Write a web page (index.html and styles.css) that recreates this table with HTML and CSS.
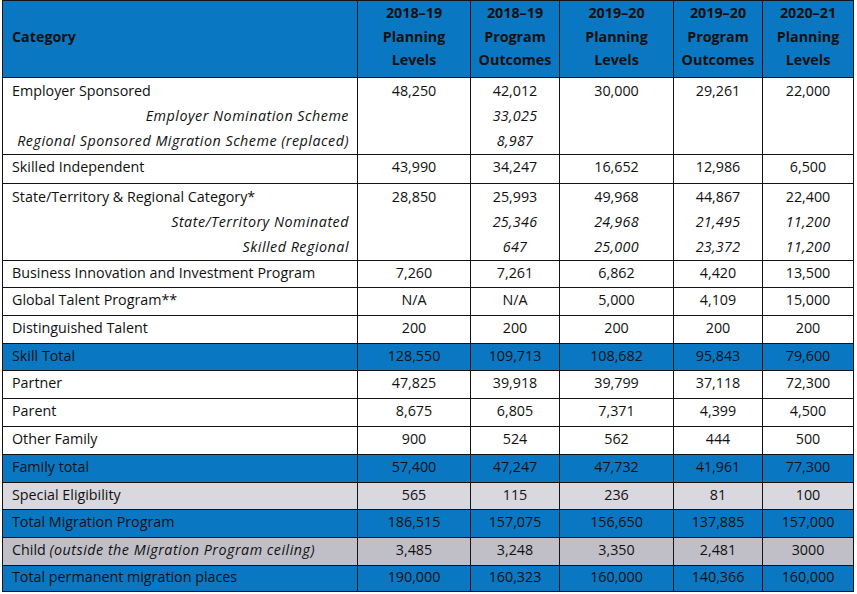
FILE: index.html
```html
<!DOCTYPE html>
<html lang="en">
<head>
<meta charset="utf-8">
<title>Migration Program planning levels</title>
<link rel="stylesheet" href="styles.css">
</head>
<body>
<table class="grid">
  <colgroup>
    <col class="c-cat">
    <col class="c-wide">
    <col class="c-narrow">
    <col class="c-wide2">
    <col class="c-narrow">
    <col class="c-last">
  </colgroup>
  <thead>
    <tr class="head">
      <th class="cat">Category</th>
      <th>2018–19<br>Planning<br>Levels</th>
      <th>2018–19<br>Program<br>Outcomes</th>
      <th>2019–20<br>Planning<br>Levels</th>
      <th>2019–20<br>Program<br>Outcomes</th>
      <th>2020–21<br>Planning<br>Levels</th>
    </tr>
  </thead>
  <tbody>
    <tr class="multi">
      <td class="cat"><div class="ln">Employer Sponsored</div><div class="ln sub">Employer Nomination Scheme</div><div class="ln sub">Regional Sponsored Migration Scheme (replaced)</div></td>
      <td><div class="ln">48,250</div></td>
      <td><div class="ln">42,012</div><div class="ln it">33,025</div><div class="ln it">8,987</div></td>
      <td><div class="ln">30,000</div></td>
      <td><div class="ln">29,261</div></td>
      <td><div class="ln">22,000</div></td>
    </tr>
    <tr class="r29">
      <td class="cat">Skilled Independent</td><td>43,990</td><td>34,247</td><td>16,652</td><td>12,986</td><td>6,500</td>
    </tr>
    <tr class="multi">
      <td class="cat"><div class="ln">State/Territory &amp; Regional Category*</div><div class="ln sub">State/Territory Nominated</div><div class="ln sub">Skilled Regional</div></td>
      <td><div class="ln">28,850</div></td>
      <td><div class="ln">25,993</div><div class="ln it">25,346</div><div class="ln it">647</div></td>
      <td><div class="ln">49,968</div><div class="ln it">24,968</div><div class="ln it">25,000</div></td>
      <td><div class="ln">44,867</div><div class="ln it">21,495</div><div class="ln it">23,372</div></td>
      <td><div class="ln">22,400</div><div class="ln it">11,200</div><div class="ln it">11,200</div></td>
    </tr>
    <tr class="r27">
      <td class="cat">Business Innovation and Investment Program</td><td>7,260</td><td>7,261</td><td>6,862</td><td>4,420</td><td>13,500</td>
    </tr>
    <tr class="r28">
      <td class="cat">Global Talent Program**</td><td>N/A</td><td>N/A</td><td>5,000</td><td>4,109</td><td>15,000</td>
    </tr>
    <tr class="r28">
      <td class="cat">Distinguished Talent</td><td>200</td><td>200</td><td>200</td><td>200</td><td>200</td>
    </tr>
    <tr class="r27 blue">
      <td class="cat">Skill Total</td><td>128,550</td><td>109,713</td><td>108,682</td><td>95,843</td><td>79,600</td>
    </tr>
    <tr class="r28">
      <td class="cat">Partner</td><td>47,825</td><td>39,918</td><td>39,799</td><td>37,118</td><td>72,300</td>
    </tr>
    <tr class="r28">
      <td class="cat">Parent</td><td>8,675</td><td>6,805</td><td>7,371</td><td>4,399</td><td>4,500</td>
    </tr>
    <tr class="r28">
      <td class="cat">Other Family</td><td>900</td><td>524</td><td>562</td><td>444</td><td>500</td>
    </tr>
    <tr class="r28 blue">
      <td class="cat">Family total</td><td>57,400</td><td>47,247</td><td>47,732</td><td>41,961</td><td>77,300</td>
    </tr>
    <tr class="r27 grey">
      <td class="cat">Special Eligibility</td><td>565</td><td>115</td><td>236</td><td>81</td><td>100</td>
    </tr>
    <tr class="r28 blue">
      <td class="cat">Total Migration Program</td><td>186,515</td><td>157,075</td><td>156,650</td><td>137,885</td><td>157,000</td>
    </tr>
    <tr class="r28 grey2">
      <td class="cat">Child <em>(outside the Migration Program ceiling)</em></td><td>3,485</td><td>3,248</td><td>3,350</td><td>2,481</td><td>3000</td>
    </tr>
    <tr class="r26 blue">
      <td class="cat">Total permanent migration places</td><td>190,000</td><td>160,323</td><td>160,000</td><td>140,366</td><td>160,000</td>
    </tr>
  </tbody>
</table>
</body>
</html>
```

FILE: styles.css
```css
html, body {
  margin: 0;
  padding: 0;
  background: #ffffff;
}

body {
  font-family: "Open Sans", Lato, "Liberation Sans", sans-serif;
  font-size: 14.3px;
  color: #111111;
}

.grid {
  margin: 0 0 0 2px;
  border-collapse: collapse;
  table-layout: fixed;
  width: 852px;
}

.c-cat { width: 355px; }
.c-wide { width: 113px; }
.c-narrow { width: 89px; }
.c-wide2 { width: 114px; }
.c-last { width: 91px; }

.grid th,
.grid td {
  border: 1px solid #141414;
  padding: 0 0 3px 0;
  text-align: center;
  vertical-align: middle;
  white-space: nowrap;
  box-sizing: border-box;
}

.grid td.cat,
.grid th.cat {
  text-align: left;
  padding-left: 9px;
}

.head th {
  background: #0a77c2;
  font-weight: bold;
  line-height: 23.5px;
  height: 76px;
  padding-bottom: 5px;
}

.multi td {
  vertical-align: top;
  height: 77px;
  padding-top: 0;
  padding-bottom: 0;
}

.ln {
  line-height: 25px;
}

.ln.sub {
  text-align: right;
  padding-right: 8px;
  font-style: italic;
  letter-spacing: 0.5px;
}

.ln.it {
  font-style: italic;
  letter-spacing: 0.3px;
}

.cat em {
  letter-spacing: 0.5px;
}

.r29 td { height: 29px; padding-bottom: 5px; }
.r28 td { height: 28px; }
.r27 td { height: 27px; }
.r26 td { height: 26px; }

.blue td {
  background: #0a77c2;
}

.grey td {
  background: #d9d8de;
}

.grey2 td {
  background: #c0bfc7;
}
```
